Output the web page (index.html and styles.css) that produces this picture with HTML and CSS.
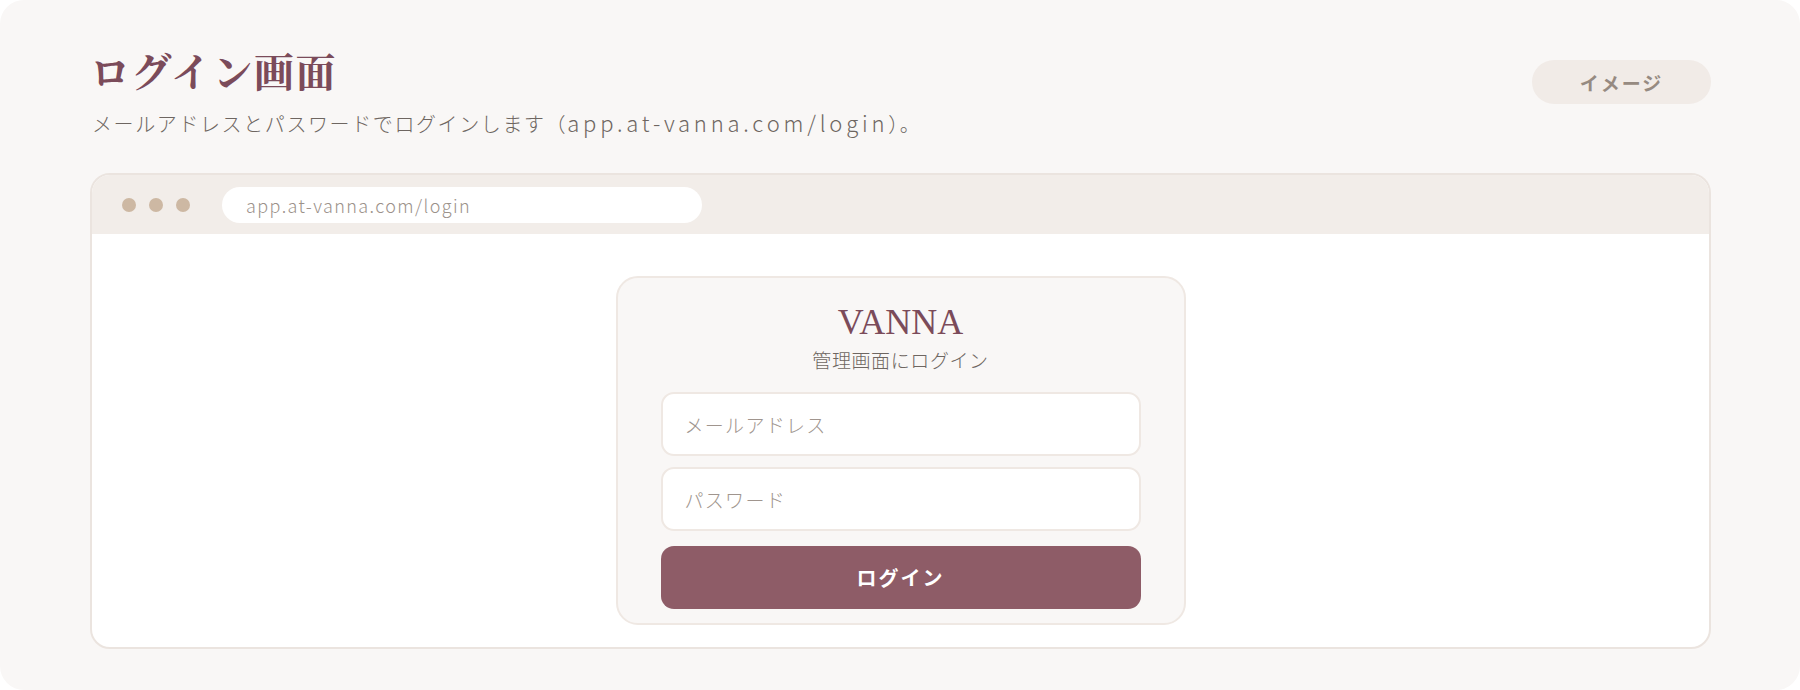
FILE: index.html
```html
<!DOCTYPE html>
<html lang="ja">
<head>
    <meta charset="UTF-8">
    <meta name="viewport" content="width=device-width, initial-scale=1.0">
    <title>ログイン画面</title>
    <link rel="stylesheet" href="styles.css">
</head>
<body>
    <div class="panel">
        <header class="panel-head">
            <div class="heading">
                <h1>ログイン画面</h1>
                <p class="lead">メールアドレスとパスワードでログインします（<span class="latin">app.at-vanna.com/login</span>）。</p>
            </div>
            <span class="badge">イメージ</span>
        </header>

        <div class="browser">
            <div class="browser-bar">
                <div class="dots">
                    <span></span><span></span><span></span>
                </div>
                <div class="url">app.at-vanna.com/login</div>
            </div>
            <div class="browser-body">
                <form class="login-card">
                    <div class="brand">VANNA</div>
                    <div class="brand-sub">管理画面にログイン</div>
                    <input type="text" class="field" placeholder="メールアドレス">
                    <input type="password" class="field" placeholder="パスワード">
                    <button type="button" class="login-btn">ログイン</button>
                </form>
            </div>
        </div>
    </div>
</body>
</html>
```

FILE: styles.css
```css
body {
    margin: 0;
    padding: 0;
    background-color: #ffffff;
    font-family: "Noto Sans CJK JP", "Liberation Sans", sans-serif;
    color: #6e6661;
}

.panel {
    width: 1800px;
    height: 690px;
    box-sizing: border-box;
    background-color: #f9f7f6;
    border-radius: 24px;
    padding: 46px 89px 0 90px;
}

.panel-head {
    display: flex;
    justify-content: space-between;
    align-items: flex-start;
}

.heading h1 {
    margin: 0;
    font-family: "Noto Serif CJK JP", "Liberation Serif", "Noto Sans CJK JP", serif;
    font-size: 40px;
    font-weight: 700;
    line-height: 48px;
    letter-spacing: 1.5px;
    color: #7b4b5a;
}

.lead {
    margin: 15px 0 0 2px;
    height: 30px;
    font-size: 20px;
    font-weight: 300;
    line-height: 30px;
    letter-spacing: 1.6px;
    color: #6e6661;
}

.lead .latin {
    font-size: 22px;
    line-height: 20px;
    letter-spacing: 3.8px;
}

.badge {
    margin-top: 14px;
    width: 179px;
    height: 44px;
    border-radius: 22px;
    background-color: #f1ebe7;
    color: #968a81;
    font-size: 19px;
    font-weight: 700;
    letter-spacing: 2px;
    display: flex;
    align-items: center;
    justify-content: center;
}

.browser {
    margin-top: 34px;
    border: 2px solid #ebe4df;
    border-radius: 20px;
    overflow: hidden;
    background-color: #ffffff;
}

.browser-bar {
    height: 59px;
    background-color: #f2ede9;
    display: flex;
    align-items: center;
    padding-left: 30px;
    gap: 32px;
}

.dots {
    display: flex;
    gap: 13px;
}

.dots span {
    width: 14px;
    height: 14px;
    border-radius: 50%;
    background-color: #cdb8a3;
}

.url {
    width: 480px;
    height: 36px;
    box-sizing: border-box;
    border-radius: 18px;
    background-color: #ffffff;
    padding-left: 24px;
    display: flex;
    align-items: center;
    font-size: 18px;
    font-weight: 300;
    letter-spacing: 1.4px;
    color: #9b918a;
}

.browser-body {
    display: flex;
    justify-content: center;
    padding: 42px 0 22px;
}

.login-card {
    width: 570px;
    box-sizing: border-box;
    border: 2px solid #efe8e3;
    border-radius: 22px;
    background-color: #f9f7f6;
    padding: 23px 43px 14px;
    display: flex;
    flex-direction: column;
    align-items: stretch;
}

.brand {
    font-family: "Liberation Serif", serif;
    font-size: 36px;
    line-height: 42px;
    text-align: center;
    color: #7b4b5a;
}

.brand-sub {
    margin-top: 3px;
    font-size: 19px;
    font-weight: 300;
    line-height: 28px;
    letter-spacing: 0.6px;
    text-align: center;
    color: #6e6661;
    margin-bottom: 18px;
}

.field {
    height: 64px;
    box-sizing: border-box;
    border: 2px solid #efe8e3;
    border-radius: 13px;
    background-color: #ffffff;
    padding: 0 22px;
    font-family: inherit;
    font-size: 19px;
    font-weight: 300;
    letter-spacing: 1.3px;
    color: #6e6661;
    outline: none;
}

.field::placeholder {
    color: #a0958e;
}

.field + .field {
    margin-top: 11px;
}

.login-btn {
    margin-top: 15px;
    height: 63px;
    border: none;
    border-radius: 13px;
    background-color: #8e5c67;
    color: #ffffff;
    font-family: inherit;
    font-size: 20px;
    font-weight: 700;
    letter-spacing: 2px;
    cursor: pointer;
}
```
